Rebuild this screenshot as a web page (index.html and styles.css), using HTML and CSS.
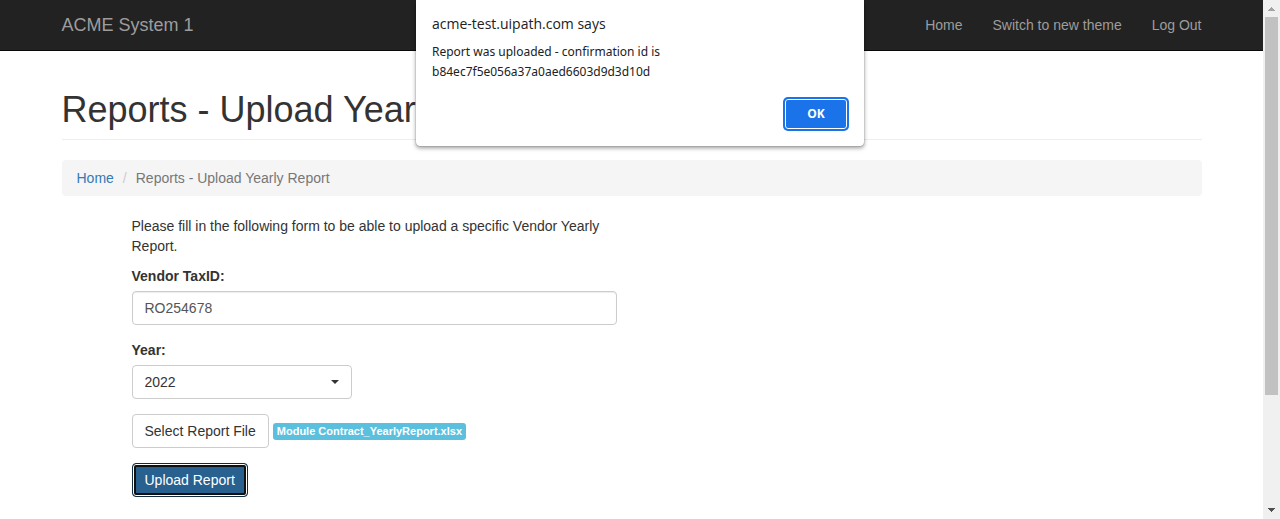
FILE: index.html
```html
<!DOCTYPE html>
<html lang="en">
<head>
<meta charset="utf-8">
<meta name="viewport" content="width=device-width, initial-scale=1">
<title>ACME System 1 - Upload Yearly Report</title>
<link rel="stylesheet" href="styles.css">
</head>
<body>
<div class="viewport">
  <div class="page">
    <header class="navbar">
      <nav class="container navbar-inner">
        <a class="brand" href="#">ACME System 1</a>
        <ul class="nav-links">
          <li><a href="#">Home</a></li>
          <li><a href="#">Switch to new theme</a></li>
          <li><a href="#">Log Out</a></li>
        </ul>
      </nav>
    </header>
    <main class="container">
      <h1 class="page-title">Reports - Upload Yearly Report</h1>
      <ol class="breadcrumb">
        <li><a href="#">Home</a></li>
        <li class="current">Reports - Upload Yearly Report</li>
      </ol>
      <form class="report-form">
        <p class="intro">Please fill in the following form to be able to upload a specific Vendor Yearly Report.</p>
        <div class="field">
          <label for="tax-id">Vendor TaxID:</label>
          <input class="text-input" id="tax-id" type="text" value="RO254678">
        </div>
        <div class="field">
          <label for="year">Year:</label>
          <div class="select-wrap">
            <select class="select" id="year"><option>2022</option></select>
            <svg class="caret" viewBox="0 0 8 4" aria-hidden="true"><path d="M0 0h8L4 4z"/></svg>
          </div>
        </div>
        <div class="file-row">
          <button class="btn" type="button">Select Report File</button>
          <span class="file-label">Module Contract_YearlyReport.xlsx</span>
        </div>
        <button class="btn btn-primary" type="button">Upload Report</button>
      </form>
    </main>
  </div>
  <div class="scrollbar" aria-hidden="true">
    <svg class="arrow arrow-up" viewBox="0 0 17 17" shape-rendering="crispEdges"><path d="M8 7h1v1h1v1h1v1h1v1H5v-1h1V9h1V8h1z"/></svg>
    <div class="track"><div class="thumb"></div></div>
    <svg class="arrow arrow-down" viewBox="0 0 17 17" shape-rendering="crispEdges"><path d="M5 6h7v1h-1v1h-1v1H9v1H8V9H7V8H6V7H5z"/></svg>
  </div>
</div>
<section class="dialog" role="alertdialog" aria-labelledby="dialog-title" aria-describedby="dialog-text">
  <h2 class="dialog-title" id="dialog-title">acme-test.uipath.com says</h2>
  <p class="dialog-text" id="dialog-text">Report was uploaded - confirmation id is b84ec7f5e056a37a0aed6603d9d3d10d</p>
  <button class="dialog-ok" type="button">OK</button>
</section>
</body>
</html>
```
FILE: styles.css
```css
* { box-sizing: border-box; }

body {
  margin: 0;
  background: #fff;
  color: #333;
  font: 14px/20px "Liberation Sans", Arial, sans-serif;
}

button, input, select { font: inherit; }
a { color: #337ab7; text-decoration: none; }

.viewport { display: flex; height: 100vh; overflow: hidden; }
.page { flex: 1; min-width: 0; }
.container { max-width: 1140px; margin: 0 auto; }

.navbar { background: #222; border-bottom: 1px solid #080808; }
.navbar-inner { display: flex; justify-content: space-between; padding: 15px 0; }
.navbar a { color: #9d9d9d; }
.brand { font-size: 18px; }
.nav-links { display: flex; gap: 30px; margin: 0; padding: 0; list-style: none; }

.page-title {
  margin: 39px 0 20px;
  padding-bottom: 9px;
  border-bottom: 1px solid #eee;
  font-size: 36px;
  font-weight: 400;
  line-height: 40px;
}

.breadcrumb {
  display: flex;
  margin: 0 0 20px;
  padding: 8px 15px;
  border-radius: 4px;
  background: #f5f5f5;
  list-style: none;
}
.current { color: #777; }
.current::before { content: "/"; padding: 0 9px; color: #ccc; }

.report-form { max-width: 555px; padding-left: 70px; }
.intro { margin: 0 0 10px; }
.field { margin-bottom: 15px; }
.field label { display: block; margin-bottom: 5px; font-weight: 700; }

.text-input, .select {
  display: block;
  width: 100%;
  height: 34px;
  padding: 6px 12px;
  border: 1px solid #ccc;
  border-radius: 4px;
  background: #fff;
}
.text-input { color: #555; box-shadow: inset 0 1px 1px rgba(0, 0, 0, 0.075); }
.select { appearance: none; color: #333; }
.select-wrap { position: relative; max-width: 220px; }
.caret {
  position: absolute;
  top: 15px;
  right: 13px;
  width: 8px;
  height: 4px;
  fill: #333;
  pointer-events: none;
}

.file-row { display: flex; align-items: center; gap: 4px; margin-bottom: 15px; }
.btn {
  padding: 6px 12px;
  border: 1px solid #ccc;
  border-radius: 4px;
  background: #fff;
  color: #333;
}
.btn-primary {
  border-color: #122b40;
  background: #286090;
  box-shadow: inset 0 0 0 1px #fff, inset 0 0 0 3px #101010;
  color: #fff;
}
.file-label {
  padding: 3px 4px;
  border-radius: 3px;
  background: #5bc0de;
  color: #fff;
  font-size: 11px;
  font-weight: 700;
  line-height: 11px;
}

.scrollbar { display: flex; flex-direction: column; width: 17px; background: #f0f0f0; }
.arrow { width: 17px; height: 17px; }
.arrow-up { fill: #a3a3a3; }
.arrow-down { fill: #505050; }
.track { flex: 1; padding: 0 2px; }
.thumb { height: 78%; background: #c1c1c1; }

.dialog {
  position: absolute;
  top: 0;
  left: 50%;
  display: flex;
  flex-direction: column;
  width: 448px;
  margin-left: -224px;
  padding: 14px 16px 16px;
  border-radius: 0 0 4px 4px;
  background: #fff;
  box-shadow: 0 0 1px rgba(0, 0, 0, 0.6), 0 2px 4px rgba(0, 0, 0, 0.4);
  color: #202124;
  font-family: "Open Sans", "Noto Sans", sans-serif;
}
.dialog-title { margin: 0 0 8px; font-size: 14px; font-weight: 400; line-height: 20px; }
.dialog-text { max-width: 320px; margin: 0 0 16px; font-family: "Noto Sans", "Open Sans", sans-serif; font-size: 12px; }
.dialog-ok {
  align-self: flex-end;
  width: 64px;
  height: 32px;
  padding: 0;
  border: 1px solid #1a73e8;
  border-radius: 4px;
  background: #1a73e8;
  box-shadow: 0 0 0 1px #1a73e8, inset 0 0 0 1px #fff;
  color: #fff;
  font-size: 12px;
  font-weight: 700;
}
```
